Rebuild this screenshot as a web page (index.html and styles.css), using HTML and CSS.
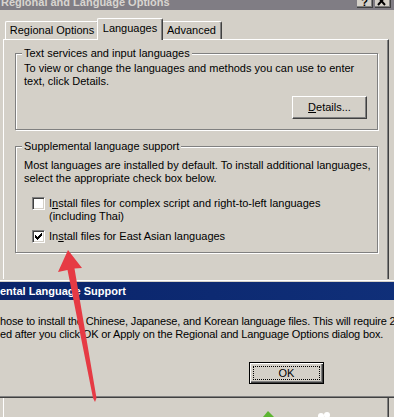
FILE: index.html
```html
<!DOCTYPE html>
<html>
<head>
  <meta name="viewport" content="width=device-width, initial-scale=1.0">
  <link rel="stylesheet" href="styles.css">
</head>

<body>
  <div class="window">
    <div class="titlebar">
      <span class="title-text">Regional and Language Options</span>
      <div class="title-btns">
        <span class="tbtn">?</span>
        <span class="tbtn">
          <svg width="14" height="7" viewBox="0 0 14 7"><path d="M3 -3 L10 5 M10 -3 L3 5" stroke="#000" stroke-width="2"/></svg>
        </span>
      </div>
    </div>

    <div class="tabs">
      <div class="tab tab-regional">Regional Options</div>
      <div class="tab tab-languages active">Languages</div>
      <div class="tab tab-advanced">Advanced</div>
    </div>

    <div class="panel">
      <fieldset class="group group-text">
        <legend>Text services and input languages</legend>
        <p>To view or change the languages and methods you can use to enter<br>text, click Details.</p>
        <div class="btn-row">
          <button class="btn"><u>D</u>etails...</button>
        </div>
      </fieldset>

      <fieldset class="group group-supp">
        <legend>Supplemental language support</legend>
        <p>Most languages are installed by default. To install additional languages,<br>select the appropriate check box below.</p>
        <div class="check check-complex">
          <span class="box"></span>
          <span>I<u>n</u>stall files for complex script and right-to-left languages<br>(including Thai)</span>
        </div>
        <div class="check check-asian">
          <span class="box">
            <svg width="7" height="7" viewBox="0 0 7 7" shape-rendering="crispEdges"><polygon points="0,2 2,4 7,-1 7,2 2,7 0,5" fill="#000"/></svg>
          </span>
          <span>In<u>s</u>tall files for East Asian languages</span>
        </div>
      </fieldset>
    </div>
  </div>

  <!-- message box lying over the options window -->
  <div class="popup">
    <div class="popup-title">ental Language Support</div>
    <div class="popup-msg">
      <p>hose to install the Chinese, Japanese, and Korean language files. This will require 230 MB or more of available disk space.</p>
      <p>ed after you click OK or Apply on the Regional and Language Options dialog box.</p>
    </div>
    <div class="popup-btns">
      <button class="ok-btn"><span class="ok-focus">OK</span></button>
    </div>
  </div>

  <svg class="overlay" width="394" height="417" viewBox="0 0 394 417">
    <polygon points="68,250 82,268 74.5,268.5 96.5,398 95,402 93,398 67.5,270 58,272" fill="#e63a44"/>
    <polygon points="263,417 268,411 274,417" fill="#5cb531"/>
    <circle cx="321" cy="416" r="3" fill="#fff"/>
    <circle cx="327" cy="415" r="3" fill="#fff"/>
  </svg>
</body>
</html>
```

FILE: styles.css
```css
body {
  margin: 0;
  width: 394px;
  height: 417px;
  overflow: hidden;
  position: relative;
  background: #d4d0c8;
  font-family: "Liberation Sans", Arial, sans-serif;
  font-size: 11px;
  line-height: 13px;
  color: #000;
}

p {
  margin: 0;
}

.window {
  display: flex;
  flex-direction: column;
  height: 417px;
}

/* inactive caption, only its lower edge is in view */
.titlebar {
  flex: none;
  height: 10px;
  display: flex;
  justify-content: space-between;
  overflow: hidden;
  background: #807d84;
}

.title-text {
  padding-left: 1px;
  font-weight: bold;
  color: #d8d5d0;
  line-height: 5px;
  white-space: nowrap;
}

.title-btns {
  display: flex;
  gap: 2px;
  padding-right: 3px;
}

.tbtn {
  box-sizing: border-box;
  width: 16px;
  height: 8px;
  background: #d4d0c8;
  border-right: 1px solid #404040;
  border-bottom: 1px solid #404040;
  box-shadow: inset -1px -1px #808080;
  font-weight: bold;
  text-align: center;
  line-height: 5px;
}

.tbtn svg {
  display: block;
}

/* tabs */
.tabs {
  flex: none;
  display: flex;
  align-items: flex-end;
  height: 21px;
  margin-top: 8px;
  padding-left: 5px;
  position: relative;
  z-index: 1;
}

.tab {
  box-sizing: border-box;
  height: 18px;
  padding-top: 2px;
  text-align: center;
  white-space: nowrap;
  background: #d4d0c8;
  border-top: 1px solid #fff;
  border-left: 1px solid #fff;
  border-right: 1px solid #404040;
  box-shadow: inset -1px 0 #808080;
  border-radius: 2px 2px 0 0;
}

.tab-regional {
  width: 94px;
}

.tab-languages {
  width: 62px;
}

.tab-advanced {
  width: 61px;
}

.tab.active {
  width: 66px;
  height: 22px;
  padding-top: 3px;
  margin: 0 -2px -1px;
  position: relative;
  z-index: 1;
}

.panel {
  flex: 1;
  margin: 0 5px 0 3px;
  border-top: 1px solid #fff;
  border-left: 1px solid #fff;
  border-right: 1px solid #404040;
  box-shadow: inset -1px 0 #808080;
}

/* etched group boxes */
.group {
  min-width: 0;
  margin: 7px 10px 0 11px;
  padding: 2px 10px 10px 8px;
  border: 1px solid #808080;
  box-shadow: inset 1px 1px #fff, 1px 1px #fff;
  white-space: nowrap;
}

.group legend {
  padding: 0 2px;
  margin-left: -2px;
  background: #d4d0c8;
  line-height: 13px;
}

.group-supp {
  margin-top: 10px;
  padding-top: 6px;
  padding-bottom: 9px;
}

.btn-row {
  display: flex;
  justify-content: flex-end;
  margin-top: 8px;
}

.btn {
  box-sizing: border-box;
  width: 75px;
  height: 23px;
  padding: 0;
  font: inherit;
  line-height: 13px;
  color: #000;
  background: #d4d0c8;
  border: 1px solid;
  border-color: #fff #404040 #404040 #fff;
  box-shadow: inset -1px -1px #808080;
}

.check {
  display: flex;
  align-items: flex-start;
  gap: 4px;
  padding-left: 8px;
  margin-top: 12px;
}

.check-asian {
  margin-top: 7px;
}

.box {
  flex: none;
  box-sizing: border-box;
  width: 13px;
  height: 13px;
  padding: 2px;
  background: #fff;
  border: 1px solid;
  border-color: #808080 #fff #fff #808080;
  box-shadow: inset 1px 1px #404040, inset -1px -1px #d4d0c8;
}

.box svg {
  display: block;
}

/* Supplemental Language Support message box */
.popup {
  position: absolute;
  left: 0;
  right: -30px;
  top: 279px;
  height: 119px;
  box-sizing: border-box;
  padding-top: 2px;
  background: #d4d0c8;
  border-top: 1px solid #d4d0c8;
  border-bottom: 1px solid #404040;
  box-shadow: inset 0 1px #fff, inset 0 -1px #808080;
  white-space: nowrap;
}

.popup-title {
  height: 18px;
  line-height: 18px;
  font-weight: bold;
  color: #fff;
  background: linear-gradient(to right, #0a246a, #10307a);
}

.popup-msg {
  padding-top: 15px;
  letter-spacing: -0.15px;
}

.popup-btns {
  margin-top: 21px;
  padding-left: 249px;
}

.ok-btn {
  box-sizing: border-box;
  display: flex;
  width: 75px;
  height: 22px;
  padding: 3px;
  font: inherit;
  color: #000;
  background: #d4d0c8;
  border: 1px solid #000;
  box-shadow: inset 1px 1px #fff, inset -1px -1px #404040, inset -2px -2px #808080;
}

.ok-focus {
  flex: 1;
  display: flex;
  align-items: center;
  justify-content: center;
  border: 1px dotted #000;
}

.overlay {
  position: absolute;
  top: 0;
  left: 0;
  pointer-events: none;
}
```
